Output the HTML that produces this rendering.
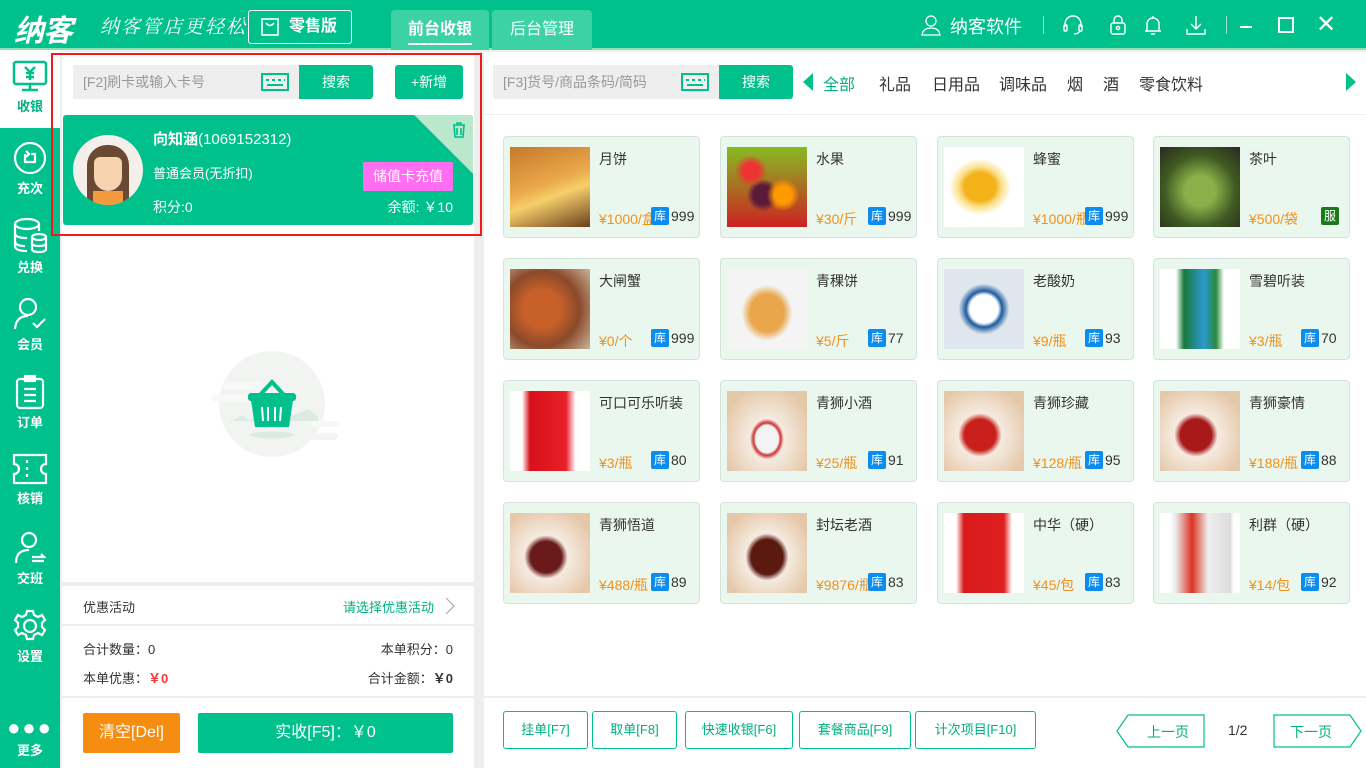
<!DOCTYPE html>
<html><head><meta charset="utf-8">
<style>
*{margin:0;padding:0;box-sizing:border-box}
body{width:1366px;height:768px;overflow:hidden;background:#eeeeee;font-family:"Liberation Sans","Noto Sans CJK SC",sans-serif;font-size:14px;color:#333;position:relative}
.a{position:absolute}
.hdr{left:0;top:0;width:1366px;height:50px;background:#00c08b;border-bottom:2px solid #8be0b5}
.side{left:0;top:50px;width:60px;height:718px;background:#00c08b}
.si{position:absolute;left:0;width:60px;text-align:center;color:#fff;font-size:13px;font-weight:bold}
.si svg{display:block;margin:0 auto 2px}
.card{position:absolute;width:197px;height:102px;background:#eaf7ef;border:1px solid #d6e3da;border-radius:4px}
.card .img{position:absolute;left:6px;top:10px;width:80px;height:80px}
.card .nm{position:absolute;left:95px;top:12px;font-size:14px;color:#333}
.card .pr{position:absolute;left:95px;top:72px;font-size:14px;color:#f39019;white-space:nowrap;width:60px;overflow:hidden}
.card .ku{position:absolute;left:147px;top:70px;width:18px;height:18px;background:#0b8df0;color:#fff;font-size:12px;text-align:center;line-height:18px;border-radius:2px}
.card .st{position:absolute;left:167px;top:71px;font-size:14px;color:#333}
.btn{position:absolute;top:711px;height:38px;border:1px solid #00c08b;border-radius:3px;color:#00b07f;font-size:13px;text-align:center;line-height:36px;background:#fff}
</style></head><body>
<div class="a hdr">
  <div class="a" style="left:14px;top:6px;font-size:30px;font-weight:bold;color:#fff;font-style:italic;letter-spacing:-1px">纳客</div>
  <div class="a" style="left:100px;top:12px;font-size:19px;color:#fff;font-family:'Noto Serif CJK SC',serif;font-style:italic;letter-spacing:2px">纳客管店更轻松</div>
  <div class="a" style="left:248px;top:10px;width:104px;height:34px;border:1px solid #fff;border-radius:3px;color:#fff;font-weight:bold;font-size:16px;line-height:32px;padding-left:40px">零售版
    <svg class="a" style="left:11px;top:6px" width="20" height="20" viewBox="0 0 20 20" fill="none" stroke="#fff" stroke-width="1.6"><rect x="2" y="2" width="16" height="16"/><path d="M6 6q4 5 8 0"/></svg></div>
  <div class="a" style="left:391px;top:10px;width:98px;height:40px;background:#3dd2a5;border-radius:4px 4px 0 0;color:#fff;font-size:16px;font-weight:bold;text-align:center;line-height:40px">前台收银<div class="a" style="left:17px;top:33px;width:64px;height:2px;background:#fff"></div></div>
  <div class="a" style="left:492px;top:10px;width:100px;height:40px;background:#3dd2a5;border-radius:4px 4px 0 0;color:#fff;font-size:16px;text-align:center;line-height:40px">后台管理</div>
  <svg class="a" style="left:920px;top:14px" width="22" height="22" viewBox="0 0 22 22" fill="none" stroke="#fff" stroke-width="1.3"><circle cx="11" cy="7" r="5"/><path d="M2 21q1-7 9-7t9 7z"/></svg>
  <div class="a" style="left:950px;top:13px;color:#fff;font-size:18px">纳客软件</div>
  <div class="a" style="left:1043px;top:16px;width:1px;height:18px;background:#9fe5cc"></div>
  <svg class="a" style="left:1062px;top:14px" width="22" height="22" viewBox="0 0 22 22" fill="none" stroke="#fff" stroke-width="1.4"><path d="M3 13v-3a8 8 0 0 1 16 0v3"/><rect x="2" y="11" width="3" height="6" rx="1"/><rect x="17" y="11" width="3" height="6" rx="1"/><path d="M18 17q-2 3-6 3"/></svg>
  <svg class="a" style="left:1109px;top:14px" width="18" height="22" viewBox="0 0 18 22" fill="none" stroke="#fff" stroke-width="1.4"><rect x="2" y="9" width="14" height="11" rx="2"/><path d="M5 9V6a4 4 0 0 1 8 0v3"/><circle cx="9" cy="14" r="1.6"/></svg>
  <svg class="a" style="left:1144px;top:14px" width="18" height="22" viewBox="0 0 18 22" fill="none" stroke="#fff" stroke-width="1.4"><path d="M3 17V10a6 6 0 0 1 12 0v7zM1 17h16M7 20h4M9 2v2"/></svg>
  <svg class="a" style="left:1185px;top:14px" width="22" height="22" viewBox="0 0 22 22" fill="none" stroke="#fff" stroke-width="1.4"><path d="M11 2v13M6 10l5 5 5-5M2 15v5h18v-5"/></svg>
  <div class="a" style="left:1226px;top:16px;width:1px;height:18px;background:#9fe5cc"></div>
  <div class="a" style="left:1240px;top:26px;width:12px;height:2px;background:#fff"></div>
  <div class="a" style="left:1278px;top:17px;width:16px;height:16px;border:2px solid #fff"></div>
  <div class="a" style="left:1316px;top:10px;color:#fff;font-size:24px">✕</div>
</div>
<div class="a side">
  <div class="si" style="top:0;height:78px;background:#fff;color:#00b07f;padding-top:10px"><svg width="36" height="34" viewBox="0 0 36 34" fill="none" stroke="#00c08b" stroke-width="2.5"><rect x="2" y="2" width="32" height="22" rx="2"/><path d="M10 30h16M18 24v6M13 7l5 5 5-5M18 12v8M14 13h8M14 17h8"/></svg>收银</div>
  <div class="si" style="top:90px"><svg width="36" height="36" viewBox="0 0 36 36" fill="none" stroke="#fff" stroke-width="2.2"><circle cx="18" cy="18" r="15"/><path d="M13 14v8h10v-8h-4M14 11l3 3-3 3"/></svg>充次</div>
  <div class="si" style="top:167px"><svg width="36" height="38" viewBox="0 0 36 38" fill="none" stroke="#fff" stroke-width="2.2"><ellipse cx="15" cy="7" rx="12" ry="5"/><path d="M3 7v22q0 5 12 5M3 16q0 5 12 5M3 24q0 5 10 5M27 7v7"/><ellipse cx="27" cy="20" rx="7" ry="3"/><path d="M20 20v12q0 3 7 3t7-3V20M20 26q0 3 7 3t7-3"/></svg>兑换</div>
  <div class="si" style="top:246px"><svg width="36" height="36" viewBox="0 0 36 36" fill="none" stroke="#fff" stroke-width="2.2"><circle cx="16" cy="11" r="8"/><path d="M3 33q1-13 13-13M21 27l4 4 8-8"/></svg>会员</div>
  <div class="si" style="top:324px"><svg width="36" height="36" viewBox="0 0 36 36" fill="none" stroke="#fff" stroke-width="2.2"><rect x="5" y="5" width="26" height="29" rx="3"/><rect x="13" y="2" width="10" height="5" fill="#fff"/><path d="M12 15h12M12 21h12M12 27h12"/></svg>订单</div>
  <div class="si" style="top:402px"><svg width="38" height="34" viewBox="0 0 38 34" fill="none" stroke="#fff" stroke-width="2.2"><path d="M3 3h32v9a5 5 0 0 0 0 10v9H3v-9a5 5 0 0 0 0-10z M16 8v3M16 15v3M16 22v3"/></svg>核销</div>
  <div class="si" style="top:480px"><svg width="36" height="36" viewBox="0 0 36 36" fill="none" stroke="#fff" stroke-width="2.2"><circle cx="17" cy="10" r="7"/><path d="M4 33q0-13 13-13M20 27h12l-3-3M32 31H20"/></svg>交班</div>
  <div class="si" style="top:558px"><svg width="36" height="36" viewBox="0 0 36 36" fill="none" stroke="#fff" stroke-width="2.2"><path d="M15 3h6l1 4 4 2 4-2 3 5-3 3v4l3 3-3 5-4-2-4 2-1 4h-6l-1-4-4-2-4 2-3-5 3-3v-4l-3-3 3-5 4 2 4-2z"/><circle cx="18" cy="18" r="6"/></svg>设置</div>
  <div class="si" style="top:670px;font-size:22px;line-height:16px;letter-spacing:2px">●●●</div>
  <div class="si" style="top:690px">更多</div>
</div>

<div class="a" style="left:62px;top:52px;width:412px;height:530px;background:#fff"></div>
<div class="a" style="left:73px;top:65px;width:226px;height:34px;background:#eeeeee;color:#999;font-size:14px;line-height:34px;padding-left:10px">[F2]刷卡或输入卡号
 <svg class="a" style="left:188px;top:8px" width="28" height="18" viewBox="0 0 28 18" fill="none" stroke="#00c08b" stroke-width="2"><rect x="1" y="1" width="26" height="16"/><path d="M5 7h3M11 7h3M17 7h3M23 7h1M6 12h16" stroke-width="2"/></svg></div>
<div class="a" style="left:299px;top:65px;width:74px;height:34px;background:#00c08b;color:#fff;text-align:center;line-height:34px;border-radius:0 3px 3px 0">搜索</div>
<div class="a" style="left:395px;top:65px;width:68px;height:34px;background:#00c08b;color:#fff;text-align:center;line-height:34px;border-radius:3px;font-size:14px">+新增</div>
<div class="a" style="left:63px;top:115px;width:410px;height:110px;background:#00c08b;border-radius:3px;overflow:hidden">
  <div class="a" style="width:100px;height:100px;background:#b9e8cd;transform:rotate(45deg);left:372px;top:-50px"></div>
  <svg class="a" style="left:389px;top:7px" width="14" height="16" viewBox="0 0 14 16" fill="none" stroke="#00c08b" stroke-width="1.6"><path d="M1 3h12M5 3V1h4v2M2 3l1 12h8l1-12M5 6v7M9 6v7"/></svg>
  <div class="a" style="left:10px;top:20px;width:70px;height:70px;border-radius:50%;background:#f4efea;overflow:hidden">
    <div class="a" style="left:14px;top:10px;width:42px;height:58px;background:#6b4a33;border-radius:20px 20px 4px 4px"></div>
    <div class="a" style="left:21px;top:22px;width:28px;height:34px;background:#f7d3b0;border-radius:6px 6px 14px 14px"></div>
    <div class="a" style="left:20px;top:56px;width:30px;height:16px;background:#f39a3e"></div>
  </div>
  <div class="a" style="left:90px;top:13px;color:#fff;font-size:15px"><b>向知涵</b>(1069152312)</div>
  <div class="a" style="left:90px;top:48px;color:#fff;font-size:13px">普通会员(无折扣)</div>
  <div class="a" style="left:300px;top:47px;width:90px;height:29px;background:#ff6ef2;color:#fff;text-align:center;line-height:29px;border-radius:2px">储值卡充值</div>
  <div class="a" style="left:90px;top:82px;color:#fff;font-size:14px">积分:0</div>
  <div class="a" style="right:20px;top:82px;color:#fff;font-size:14px">余额: ￥10</div>
</div>
<div class="a" style="left:51px;top:53px;width:431px;height:183px;border:2px solid #f01a1a"></div>
<svg class="a" style="left:200px;top:345px" width="140" height="115" viewBox="0 0 140 115">
  <circle cx="72" cy="59" r="53" fill="#f1f4f1"/>
  <rect x="22" y="37" width="40" height="7" rx="3.5" fill="#f7f8f7"/><rect x="12" y="50" width="40" height="7" rx="3.5" fill="#f7f8f7"/>
  <rect x="100" y="88" width="38" height="7" rx="3.5" fill="#f3f5f3"/><rect x="110" y="76" width="30" height="6" rx="3" fill="#f7f8f7"/>
  <path d="M30 78l12-8 8 6 10-8 30 4 18-8 10 8 v4H30z" fill="#dcebe2"/>
  <ellipse cx="72" cy="90" rx="22" ry="3.5" fill="#dcebe2"/>
  <path d="M60 50l12-13 12 13" fill="none" stroke="#00c08b" stroke-width="4"/>
  <rect x="48" y="48" width="48" height="8" rx="3" fill="#00c08b"/>
  <path d="M51 55h42l-4 27h-34z" fill="#00c08b"/>
  <path d="M62 62l1 14M68 62v14M75 62v14M81 62l-1 14" stroke="#fff" stroke-width="2"/>
</svg>
<div class="a" style="left:62px;top:586px;width:412px;height:38px;background:#fff"></div>
<div class="a" style="left:83px;top:597px;font-size:13px">优惠活动</div>
<div class="a" style="left:343px;top:597px;font-size:13px;color:#00b07f">请选择优惠活动</div>
<svg class="a" style="left:445px;top:597px" width="10" height="18" viewBox="0 0 10 18"><path d="M1 1l8 8-8 8" fill="none" stroke="#aaa" stroke-width="1.2"/></svg>
<div class="a" style="left:62px;top:626px;width:412px;height:70px;background:#fff"></div>
<div class="a" style="left:83px;top:639px;font-size:13px">合计数量：0</div>
<div class="a" style="right:913px;top:639px;font-size:13px">本单积分：0</div>
<div class="a" style="left:83px;top:668px;font-size:13px">本单优惠：<b style="color:#f33">￥0</b></div>
<div class="a" style="right:913px;top:668px;font-size:13px">合计金额：<b>￥0</b></div>
<div class="a" style="left:62px;top:698px;width:412px;height:70px;background:#fff"></div>
<div class="a" style="left:83px;top:713px;width:97px;height:40px;background:#f68c10;color:#fff;font-size:16px;text-align:center;line-height:40px;border-radius:2px">清空[Del]</div>
<div class="a" style="left:198px;top:713px;width:255px;height:40px;background:#00c08b;color:#fff;font-size:16px;text-align:center;line-height:40px;border-radius:2px">实收[F5]：￥0</div>

<div class="a" style="left:484px;top:52px;width:882px;height:644px;background:#fff"></div>
<div class="a" style="left:484px;top:114px;width:882px;height:1px;background:#eee"></div>
<div class="a" style="left:493px;top:65px;width:226px;height:34px;background:#eeeeee;color:#999;font-size:14px;line-height:34px;padding-left:10px">[F3]货号/商品条码/简码
 <svg class="a" style="left:188px;top:8px" width="28" height="18" viewBox="0 0 28 18" fill="none" stroke="#00c08b" stroke-width="2"><rect x="1" y="1" width="26" height="16"/><path d="M5 7h3M11 7h3M17 7h3M23 7h1M6 12h16"/></svg></div>
<div class="a" style="left:719px;top:65px;width:74px;height:34px;background:#00c08b;color:#fff;text-align:center;line-height:34px;border-radius:0 3px 3px 0">搜索</div>
<div class="a" style="left:803px;top:73px;width:0;height:0;border-top:9px solid transparent;border-bottom:9px solid transparent;border-right:10px solid #00c08b"></div>
<div class="a" style="left:1346px;top:73px;width:0;height:0;border-top:9px solid transparent;border-bottom:9px solid transparent;border-left:10px solid #00c08b"></div>
<div class="a" style="left:823px;top:71px;font-size:16px;color:#00b07f">全部</div>
<div class="a" style="left:879px;top:71px;font-size:16px">礼品</div>
<div class="a" style="left:932px;top:71px;font-size:16px">日用品</div>
<div class="a" style="left:999px;top:71px;font-size:16px">调味品</div>
<div class="a" style="left:1067px;top:71px;font-size:16px">烟</div>
<div class="a" style="left:1103px;top:71px;font-size:16px">酒</div>
<div class="a" style="left:1139px;top:71px;font-size:16px">零食饮料</div>

<div class="card" style="left:503px;top:136px"><div class="img" style="background:linear-gradient(160deg,#c5782a,#e9a84a 45%,#f6cf6a 60%,#6a3f1c)"></div><div class="nm">月饼</div><div class="pr">¥1000/盒</div><div class="ku">库</div><div class="st">999</div></div>
<div class="card" style="left:720px;top:136px"><div class="img" style="background:radial-gradient(circle at 30% 30%,#e33 10%,transparent 20%),radial-gradient(circle at 70% 60%,#f90 12%,transparent 22%),radial-gradient(circle at 45% 60%,#5a1a3a 15%,transparent 25%),linear-gradient(#8b2,#c22)"></div><div class="nm">水果</div><div class="pr">¥30/斤</div><div class="ku">库</div><div class="st">999</div></div>
<div class="card" style="left:937px;top:136px"><div class="img" style="background:radial-gradient(ellipse at 45% 50%,#f3b21a 25%,#fbe08a 35%,#fff 50%)"></div><div class="nm">蜂蜜</div><div class="pr">¥1000/瓶</div><div class="ku">库</div><div class="st">999</div></div>
<div class="card" style="left:1153px;top:136px"><div class="img" style="background:radial-gradient(circle at 50% 55%,#8bb04a 25%,#3f5a22 60%,#2b2a1e)"></div><div class="nm">茶叶</div><div class="pr">¥500/袋</div><div class="ku" style="left:167px;background:#1a7a1a">服</div></div>

<div class="card" style="left:503px;top:258px"><div class="img" style="background:radial-gradient(circle at 40% 50%,#c8602a 30%,#8a4a2a 60%,#c9b59a)"></div><div class="nm">大闸蟹</div><div class="pr">¥0/个</div><div class="ku">库</div><div class="st">999</div></div>
<div class="card" style="left:720px;top:258px"><div class="img" style="background:radial-gradient(ellipse at 50% 55%,#e9a64a 30%,#f4f4f4 45%)"></div><div class="nm">青稞饼</div><div class="pr">¥5/斤</div><div class="ku">库</div><div class="st">77</div></div>
<div class="card" style="left:937px;top:258px"><div class="img" style="background:radial-gradient(ellipse at 50% 50%,#fff 25%,#1c5b9e 32%,#dfe6ee 45%)"></div><div class="nm">老酸奶</div><div class="pr">¥9/瓶</div><div class="ku">库</div><div class="st">93</div></div>
<div class="card" style="left:1153px;top:258px"><div class="img" style="background:linear-gradient(90deg,#fff 20%,#1a7a3a 30%,#2a9ad0 55%,#2a8a3a 70%,#fff 80%)"></div><div class="nm">雪碧听装</div><div class="pr">¥3/瓶</div><div class="ku">库</div><div class="st">70</div></div>

<div class="card" style="left:503px;top:380px"><div class="img" style="background:linear-gradient(90deg,#fff 15%,#d8101a 25%,#e8202a 70%,#fff 82%)"></div><div class="nm">可口可乐听装</div><div class="pr">¥3/瓶</div><div class="ku">库</div><div class="st">80</div></div>
<div class="card" style="left:720px;top:380px"><div class="img" style="background:radial-gradient(ellipse at 50% 60%,#f3f3f3 20%,#c33 24%,#f5ebe0 30%,#e5c8aa 80%)"></div><div class="nm">青狮小酒</div><div class="pr">¥25/瓶</div><div class="ku">库</div><div class="st">91</div></div>
<div class="card" style="left:937px;top:380px"><div class="img" style="background:radial-gradient(ellipse at 45% 55%,#c8201a 25%,#f5ebe0 35%,#e5c8aa 80%)"></div><div class="nm">青狮珍藏</div><div class="pr">¥128/瓶</div><div class="ku">库</div><div class="st">95</div></div>
<div class="card" style="left:1153px;top:380px"><div class="img" style="background:radial-gradient(ellipse at 45% 55%,#a81a1a 25%,#f5ebe0 35%,#e5c8aa 80%)"></div><div class="nm">青狮豪情</div><div class="pr">¥188/瓶</div><div class="ku">库</div><div class="st">88</div></div>

<div class="card" style="left:503px;top:502px"><div class="img" style="background:radial-gradient(ellipse at 45% 55%,#6a1a1a 25%,#f5ebe0 35%,#e5c8aa 80%)"></div><div class="nm">青狮悟道</div><div class="pr">¥488/瓶</div><div class="ku">库</div><div class="st">89</div></div>
<div class="card" style="left:720px;top:502px"><div class="img" style="background:radial-gradient(ellipse at 50% 55%,#5a1a10 28%,#f5ebe0 38%,#e5c8aa 80%)"></div><div class="nm">封坛老酒</div><div class="pr">¥9876/瓶</div><div class="ku">库</div><div class="st">83</div></div>
<div class="card" style="left:937px;top:502px"><div class="img" style="background:linear-gradient(90deg,#fff 15%,#d81a1a 25%,#e02020 75%,#fff 85%)"></div><div class="nm">中华（硬）</div><div class="pr">¥45/包</div><div class="ku">库</div><div class="st">83</div></div>
<div class="card" style="left:1153px;top:502px"><div class="img" style="background:linear-gradient(90deg,#fff 12%,#e8e8e8 20%,#d32 40%,#eee 60%,#ddd 88%,#fff 92%)"></div><div class="nm">利群（硬）</div><div class="pr">¥14/包</div><div class="ku">库</div><div class="st">92</div></div>

<div class="a" style="left:484px;top:698px;width:882px;height:70px;background:#fff"></div>
<div class="btn" style="left:503px;width:85px">挂单[F7]</div>
<div class="btn" style="left:592px;width:85px">取单[F8]</div>
<div class="btn" style="left:685px;width:108px">快速收银[F6]</div>
<div class="btn" style="left:799px;width:112px">套餐商品[F9]</div>
<div class="btn" style="left:915px;width:121px">计次项目[F10]</div>
<svg class="a" style="left:1116px;top:714px" width="90" height="34" viewBox="0 0 90 34"><path d="M12 1H88V33H12L1 17z" fill="#fff" stroke="#00c08b" stroke-width="1.2"/><text x="52" y="23" text-anchor="middle" font-size="14" fill="#00b07f" font-family="Liberation Sans,Noto Sans CJK SC,sans-serif">上一页</text></svg>
<div class="a" style="left:1228px;top:722px;font-size:14px">1/2</div>
<svg class="a" style="left:1273px;top:714px" width="90" height="34" viewBox="0 0 90 34"><path d="M1 1H77L88 17L77 33H1z" fill="#fff" stroke="#00c08b" stroke-width="1.2"/><text x="38" y="23" text-anchor="middle" font-size="14" fill="#00b07f" font-family="Liberation Sans,Noto Sans CJK SC,sans-serif">下一页</text></svg>
</body></html>
